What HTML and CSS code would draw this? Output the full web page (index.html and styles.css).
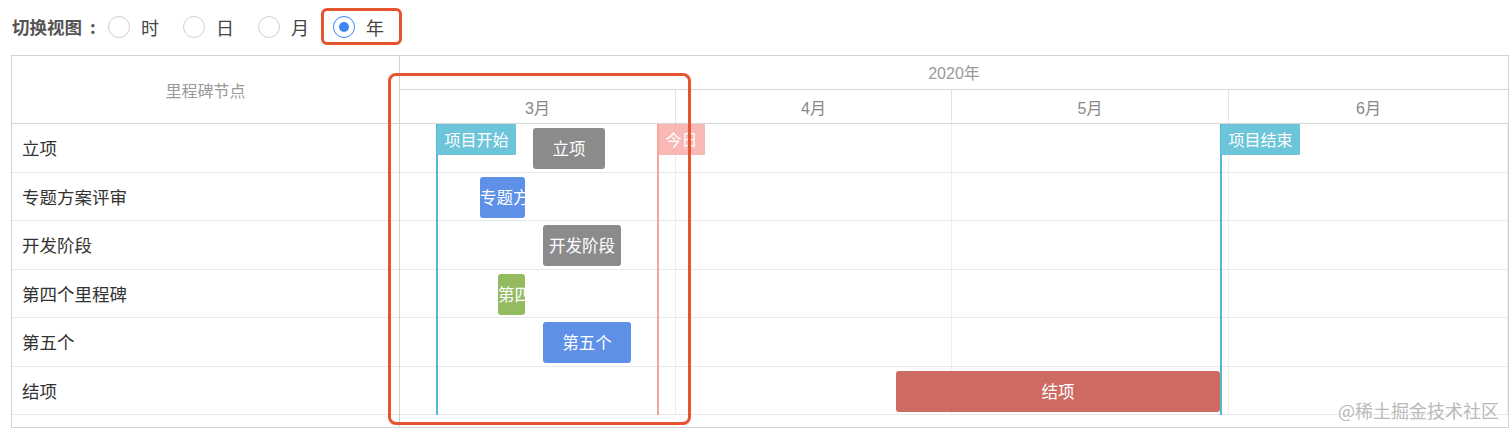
FILE: index.html
```html
<!DOCTYPE html>
<html lang="zh-CN">
<head>
<meta charset="utf-8">
<title>Gantt</title>
<link rel="stylesheet" href="styles.css">
</head>
<body>
<div class="page">
  <div class="toolbar">
    <span class="tb-label">切换视图<span class="colon">:</span></span>
    <label class="radio"><span class="dot"></span><span class="rtext">时</span></label>
    <label class="radio"><span class="dot"></span><span class="rtext">日</span></label>
    <label class="radio"><span class="dot"></span><span class="rtext">月</span></label>
    <label class="radio checked"><span class="dot"></span><span class="rtext">年</span></label>
  </div>

  <div class="gantt">
    <div class="names">
      <div class="names-head">里程碑节点</div>
      <div class="name-row">立项</div>
      <div class="name-row">专题方案评审</div>
      <div class="name-row">开发阶段</div>
      <div class="name-row">第四个里程碑</div>
      <div class="name-row">第五个</div>
      <div class="name-row">结项</div>
    </div>

    <div class="timeline">
      <div class="year-head">2020年</div>
      <div class="month-head">
        <div class="month">3月</div>
        <div class="month">4月</div>
        <div class="month">5月</div>
        <div class="month">6月</div>
      </div>
      <div class="tl-body">
        <div class="tl-row">
          <div class="cell"></div><div class="cell"></div><div class="cell"></div><div class="cell"></div>
          <div class="bar gray" style="left:133px;width:72px">立项</div>
        </div>
        <div class="tl-row">
          <div class="cell"></div><div class="cell"></div><div class="cell"></div><div class="cell"></div>
          <div class="bar blue" style="left:80px;width:45px">专题方案评审</div>
        </div>
        <div class="tl-row">
          <div class="cell"></div><div class="cell"></div><div class="cell"></div><div class="cell"></div>
          <div class="bar gray" style="left:143px;width:78px">开发阶段</div>
        </div>
        <div class="tl-row">
          <div class="cell"></div><div class="cell"></div><div class="cell"></div><div class="cell"></div>
          <div class="bar green" style="left:98px;width:27px">第四个里程碑</div>
        </div>
        <div class="tl-row">
          <div class="cell"></div><div class="cell"></div><div class="cell"></div><div class="cell"></div>
          <div class="bar blue" style="left:143px;width:88px">第五个</div>
        </div>
        <div class="tl-row">
          <div class="cell"></div><div class="cell"></div><div class="cell"></div><div class="cell"></div>
          <div class="bar red" style="left:496px;width:324px">结项</div>
        </div>

        <div class="marker start" style="left:36px"><span class="mlabel">项目开始</span></div>
        <div class="marker today" style="left:257px"><span class="mlabel">今日</span></div>
        <div class="marker start" style="left:820px"><span class="mlabel">项目结束</span></div>
      </div>
    </div>

    <div class="highlight"></div>
    <div class="watermark">@稀土掘金技术社区</div>
  </div>
</div>
</body>
</html>
```

FILE: styles.css
```css
*, *::before, *::after { box-sizing: border-box; }

html, body {
  margin: 0;
  padding: 0;
  background: #fff;
}

body {
  font-family: "Liberation Sans", "Noto Sans CJK SC", sans-serif;
  color: #333;
}

.page {
  width: 1512px;
  height: 438px;
  overflow: hidden;
}

/* toolbar */
.toolbar {
  height: 55px;
  display: flex;
  align-items: center;
  padding-left: 12px;
  padding-bottom: 2px;
}

.tb-label {
  font-family: "Noto Sans CJK SC", sans-serif;
  font-size: 17.5px;
  font-weight: 700;
  color: #555;
  width: 96px;
  line-height: 22px;
  white-space: nowrap;
}

.colon {
  margin-left: 8px;
}

.radio {
  position: relative;
  display: inline-flex;
  align-items: center;
  height: 22px;
  gap: 11px;
  margin-right: 24px;
}

.dot {
  width: 22px;
  height: 22px;
  border-radius: 50%;
  border: 1px solid #d0d0d0;
  background: #fff;
  display: inline-flex;
  align-items: center;
  justify-content: center;
}

.rtext {
  font-family: "Noto Sans CJK SC", sans-serif;
  font-size: 18px;
  color: #444;
  line-height: 22px;
}

.radio.checked .dot {
  border-color: #3d86f0;
}

.radio.checked .dot::after {
  content: "";
  width: 10px;
  height: 10px;
  border-radius: 50%;
  background: #3d86f0;
}

.radio.checked::before {
  content: "";
  position: absolute;
  left: -12px;
  top: -8px;
  width: 81px;
  height: 37px;
  border: 3px solid #e6532f;
  border-radius: 6px;
}

/* gantt */
.gantt {
  position: relative;
  margin-left: 11px;
  width: 1498px;
  height: 373px;
  border: 1px solid #d2d2d2;
  display: flex;
}

.names {
  width: 388px;
  flex: none;
  border-right: 1px solid #d2d2d2;
}

.names-head {
  height: 68px;
  border-bottom: 1px solid #d6d6d6;
  display: flex;
  align-items: center;
  justify-content: center;
  font-family: "Noto Sans CJK SC", sans-serif;
  font-size: 16px;
  color: #9a9a9a;
}

.name-row {
  height: 48.5px;
  border-bottom: 1px solid #e9e9e9;
  display: flex;
  align-items: center;
  padding-left: 10px;
  font-family: "Noto Sans CJK SC", sans-serif;
  font-size: 17.5px;
  color: #333;
}

.timeline {
  flex: 1;
  min-width: 0;
}

.year-head {
  height: 34px;
  border-bottom: 1px solid #d6d6d6;
  display: flex;
  align-items: center;
  justify-content: center;
  font-size: 16px;
  color: #9a9a9a;
  padding-bottom: 1px;
}

.month-head {
  height: 34px;
  border-bottom: 1px solid #d6d6d6;
  display: grid;
  grid-template-columns: 276px 276px 277px 1fr;
}

.month {
  border-right: 1px solid #e3e3e3;
  display: flex;
  align-items: center;
  justify-content: center;
  font-size: 16px;
  color: #888;
}

.month:last-child { border-right: none; }

.tl-body {
  position: relative;
  height: 303px;
}

.tl-row {
  position: relative;
  height: 48.5px;
  border-bottom: 1px solid #e9e9e9;
  display: grid;
  grid-template-columns: 276px 276px 277px 1fr;
}

.cell {
  border-right: 1px solid #eeeeee;
}

.cell:last-child { border-right: none; }

.bar {
  position: absolute;
  top: 4px;
  height: 41px;
  border-radius: 3px;
  color: #fff;
  font-family: "Noto Sans CJK SC", sans-serif;
  font-size: 16.5px;
  line-height: 41px;
  text-align: center;
  white-space: nowrap;
  overflow: hidden;
  z-index: 1;
}

.bar.gray { background: #8b8b8b; }
.bar.blue { background: #5e90e8; }
.bar.green { background: #94bb5f; }
.bar.red { background: #cd6a62; }

.marker {
  position: absolute;
  top: 0;
  height: 291px;
  width: 2px;
  z-index: 2;
}

.marker.start { background: #52b8d3; }
.marker.today { background: #f5a6a0; }

.mlabel {
  position: absolute;
  left: 1px;
  top: 0;
  height: 31px;
  line-height: 31px;
  padding: 0 7.5px;
  white-space: nowrap;
  color: #fff;
  font-family: "Noto Sans CJK SC", sans-serif;
  font-size: 16px;
}

.marker.start .mlabel { background: #6cc5d9; }
.marker.today .mlabel { background: rgba(247, 160, 154, 0.75); }

.highlight {
  position: absolute;
  left: 376px;
  top: 17px;
  width: 303px;
  height: 352px;
  border: 3px solid #e6532f;
  border-radius: 8px;
  z-index: 5;
}

.watermark {
  position: absolute;
  right: 9px;
  top: 342px;
  font-family: "Noto Sans CJK SC", sans-serif;
  font-size: 18px;
  line-height: 24px;
  color: #b9b9b9;
  text-shadow: 0 0 2px #fff;
  z-index: 6;
  white-space: nowrap;
}
```
